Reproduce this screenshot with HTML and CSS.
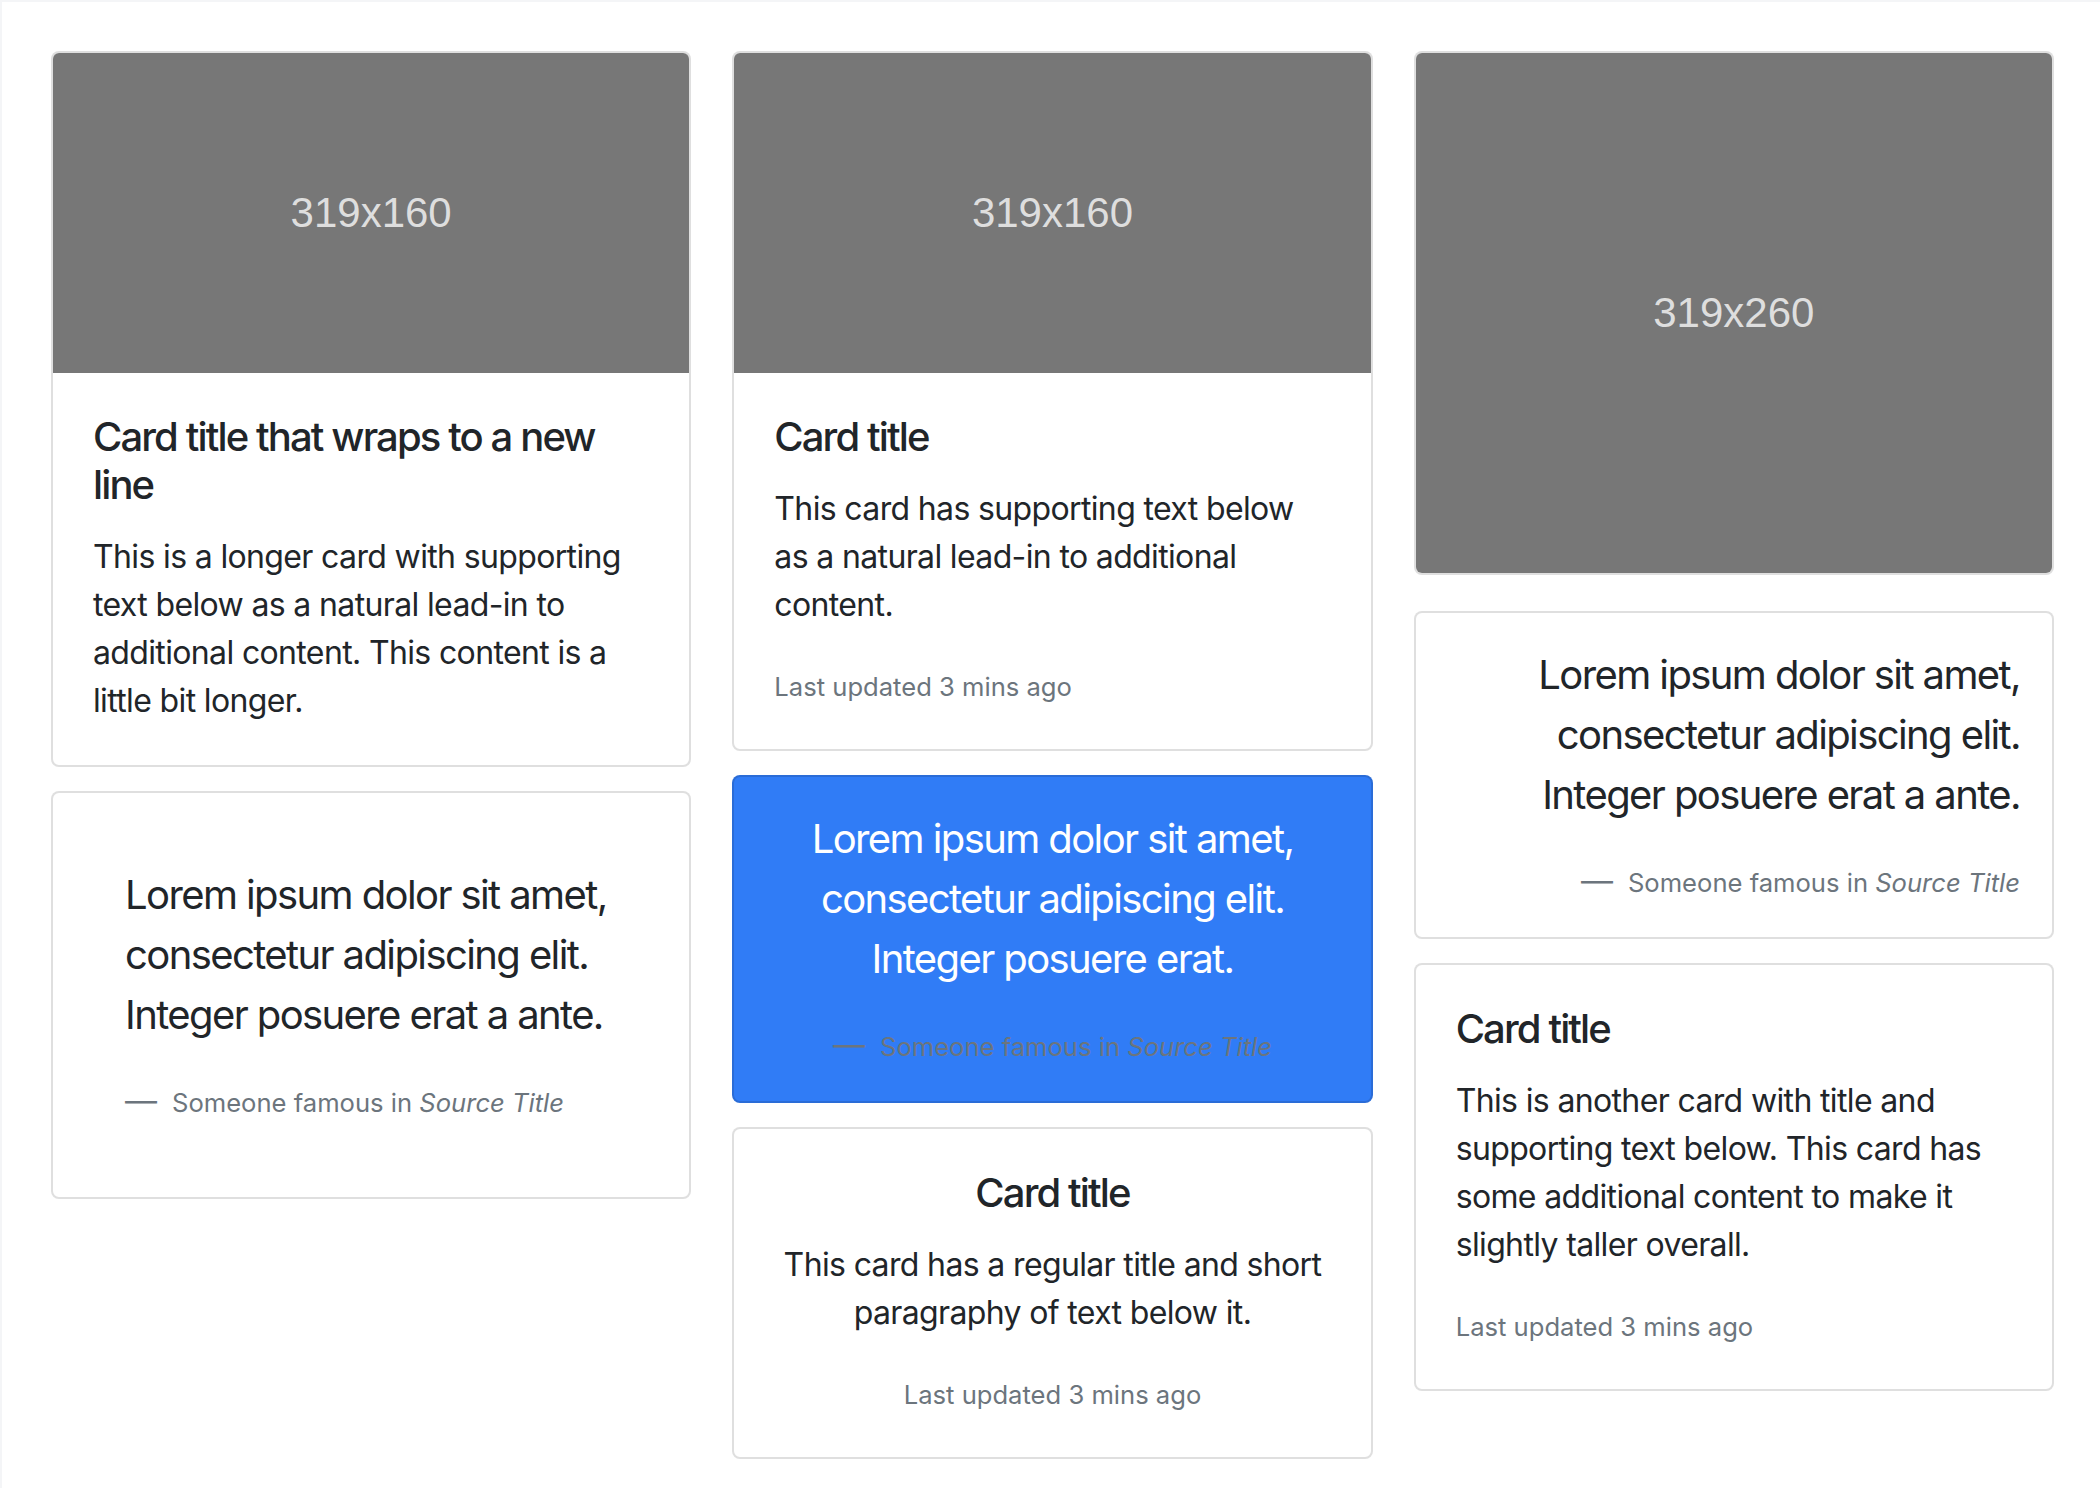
FILE: index.html
```html
<!DOCTYPE html>
<html lang="en">
<head>
<meta charset="utf-8">
<title>Card columns</title>
<link rel="stylesheet" href="styles.css">
</head>
<body>
<div class="page">
  <div class="card-columns">
    <div class="col">
      <div class="card">
        <div class="ph ph-top ph-160"><span>319x160</span></div>
        <div class="card-body">
          <h5 class="card-title">Card title that wraps to a new line</h5>
          <p class="card-text">This is a longer card with supporting text below as a natural lead-in to additional content. This content is a little bit longer.</p>
        </div>
      </div>
      <div class="card p-3">
        <blockquote class="blockquote card-body">
          <p>Lorem ipsum dolor sit amet, consectetur adipiscing elit. Integer posuere erat a ante.</p>
          <footer class="blockquote-footer"><small class="text-muted">Someone famous in <cite title="Source Title">Source Title</cite></small></footer>
        </blockquote>
      </div>
    </div>
    <div class="col">
      <div class="card">
        <div class="ph ph-top ph-160"><span>319x160</span></div>
        <div class="card-body">
          <h5 class="card-title">Card title</h5>
          <p class="card-text">This card has supporting text below as a natural lead-in to additional content.</p>
          <p class="card-text"><small class="text-muted">Last updated 3 mins ago</small></p>
        </div>
      </div>
      <div class="card bg-primary text-center p-3">
        <blockquote class="blockquote">
          <p>Lorem ipsum dolor sit amet, consectetur adipiscing elit. Integer posuere erat.</p>
          <footer class="blockquote-footer"><small>Someone famous in <cite title="Source Title">Source Title</cite></small></footer>
        </blockquote>
      </div>
      <div class="card text-center">
        <div class="card-body">
          <h5 class="card-title">Card title</h5>
          <p class="card-text">This card has a regular title and short paragraphy of text below it.</p>
          <p class="card-text"><small class="text-muted">Last updated 3 mins ago</small></p>
        </div>
      </div>
    </div>
    <div class="col">
      <div class="card card-img-only">
        <div class="ph ph-260"><span>319x260</span></div>
      </div>
      <div class="card p-3 text-right">
        <blockquote class="blockquote">
          <p>Lorem ipsum dolor sit amet, consectetur adipiscing elit. Integer posuere erat a ante.</p>
          <footer class="blockquote-footer"><small class="text-muted">Someone famous in <cite title="Source Title">Source Title</cite></small></footer>
        </blockquote>
      </div>
      <div class="card">
        <div class="card-body">
          <h5 class="card-title">Card title</h5>
          <p class="card-text">This is another card with title and supporting text below. This card has some additional content to make it slightly taller overall.</p>
          <p class="card-text"><small class="text-muted">Last updated 3 mins ago</small></p>
        </div>
      </div>
    </div>
  </div>
</div>
</body>
</html>
```

FILE: styles.css
```css
html, body {
  margin: 0;
  padding: 0;
  background: #fff;
}

body {
  font-family: Inter, "Noto Sans", "Liberation Sans", sans-serif;
  font-size: 32px;
  line-height: 1.5;
  color: #212529;
  width: 2100px;
  height: 1488px;
  overflow: hidden;
}

.page {
  box-sizing: border-box;
  height: 1488px;
  border-top: 2px solid #f4f5f7;
  border-left: 2px solid #f4f5f7;
  padding: 49px 0 0 49px;
}

.card-columns {
  display: flex;
  align-items: flex-start;
  gap: 41px;
  width: 2003px;
}

.col {
  flex: 1 1 0;
  min-width: 0;
  display: flex;
  flex-direction: column;
}

.card {
  background: #fff;
  border: 2px solid rgba(0, 0, 0, 0.125);
  border-radius: 8px;
  margin-bottom: 24px;
  overflow: hidden;
}

.card-img-only {
  margin-bottom: 36px;
}

.ph {
  background: #777777;
  color: #dedede;
  display: flex;
  align-items: center;
  justify-content: center;
  font-family: "Liberation Sans", Arial, sans-serif;
  font-size: 42px;
  line-height: 1;
}

.ph-160 {
  height: 320px;
}

.ph-260 {
  height: 520px;
}

.card-body {
  padding: 40px;
}

.p-3 {
  padding: 32px;
}

.card-title {
  font-size: 40px;
  font-weight: 500;
  line-height: 1.2;
  margin: 0 0 24px;
  letter-spacing: -0.047em;
}

.card-text {
  margin: 0 0 32px;
  letter-spacing: -0.02em;
}

.card-text:last-child {
  margin-bottom: 0;
}

.text-muted {
  color: #6c757d;
}

small {
  font-size: 80%;
  letter-spacing: 0;
}

.blockquote {
  margin: 0;
  font-size: 40px;
  line-height: 1.5;
}

.blockquote p {
  margin: 0 0 32px;
  letter-spacing: -0.04em;
}

.blockquote-footer {
  display: block;
  font-size: 80%;
  line-height: 1.5;
  color: #6c757d;
}

.blockquote-footer::before {
  content: "\2014\00A0";
  padding-right: 6px;
}

.bg-primary {
  background: #307cf6;
  color: #fff;
}

.text-center {
  text-align: center;
}

.text-right {
  text-align: right;
}
```
